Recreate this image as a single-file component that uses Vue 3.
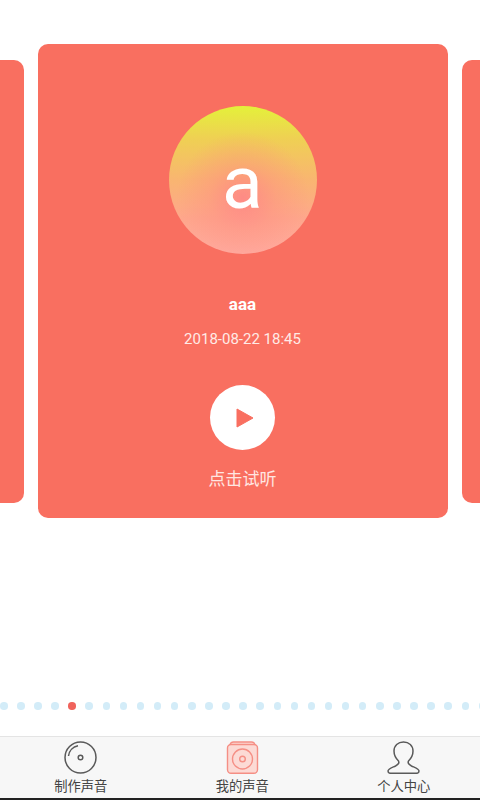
<script setup>
const dots = Array.from({ length: 29 }, (_, i) => i)
</script>

<template>
  <div class="page">
    <div class="carousel">
      <div class="side"></div>
      <div class="card">
        <div class="avatar">a</div>
        <div class="name">aaa</div>
        <div class="date">2018-08-22 18:45</div>
        <div class="play">
          <svg width="18" height="20" viewBox="0 0 18 20"><path d="M1 1 L17 10 L1 19 Z" fill="#f96f60" stroke="#f96f60" stroke-linejoin="round" /></svg>
        </div>
        <div class="hint">点击试听</div>
      </div>
      <div class="side"></div>
    </div>
    <div class="dots">
      <span v-for="d in dots" :key="d" class="dot" :class="{ on: d === 4 }"></span>
    </div>
    <div class="tabs">
      <div class="tab">
        <svg class="icon" width="33" height="33" viewBox="0 0 33 33" fill="none" stroke="#5a5a5a" stroke-width="1.500">
          <circle cx="16.500" cy="16.500" r="15.500" />
          <circle cx="16.500" cy="16.500" r="2.300" />
          <path d="M4.500 15 A12 12 0 0 1 14 4.700" />
        </svg>
        <span>制作声音</span>
      </div>
      <div class="tab">
        <svg class="icon" width="33" height="33" viewBox="0 0 33 33" fill="#fcdad5" stroke="#f58f85" stroke-width="1.400">
          <path d="M4 4 Q4.500 1 7.500 1 H25.500 Q28.500 1 29 4" />
          <rect x="1.500" y="3.500" width="30" height="28.800" rx="3.500" />
          <circle cx="16.500" cy="18" r="10" />
          <circle cx="16.500" cy="18" r="2.800" />
        </svg>
        <span>我的声音</span>
      </div>
      <div class="tab">
        <svg class="icon" width="33" height="33" viewBox="0 0 33 33" fill="none" stroke="#5a5a5a" stroke-width="1.500">
          <path d="M16.500 1 C11 1 7 4.500 7 10 C7 14 8.500 17 11.500 20 C12.500 22 11.500 23.500 8.500 25 C4.500 26.800 1 27.800 1 30 C1 31.500 2 32.300 3.500 32.300 H29.500 C31 32.300 32 31.500 32 30 C32 27.800 28.500 26.800 24.500 25 C21.500 23.500 20.500 22 21.500 20 C24.500 17 26 14 26 10 C26 4.500 22 1 16.500 1 Z" />
        </svg>
        <span>个人中心</span>
      </div>
    </div>
  </div>
</template>

<style scoped>
.page {
  width: 480px;
  height: 800px;
  background: #fff;
  position: relative;
  overflow: hidden;
  font-family: Roboto, "Noto Sans CJK SC", sans-serif;
}
.carousel {
  height: 518px;
  padding: 44px 0 0 5px;
  box-sizing: border-box;
  display: flex;
  gap: 14px;
  justify-content: center;
  align-items: center;
}
.side {
  width: 410px;
  height: 443px;
  background: #f96f60;
  border-radius: 10px;
  flex-shrink: 0;
}
.card {
  width: 410px;
  height: 474px;
  background: #f96f60;
  border-radius: 10px;
  flex-shrink: 0;
  display: flex;
  flex-direction: column;
  align-items: center;
  color: #fff;
}
.avatar {
  margin-top: 62px;
  width: 148px;
  height: 148px;
  border-radius: 50%;
  background:
    radial-gradient(circle at 50% 62%, rgba(255, 130, 135, 0.8) 0, rgba(255, 140, 130, 0.4) 28%, rgba(255, 150, 135, 0) 56%),
    linear-gradient(180deg, #e4f13a 0%, #efd053 22%, #f9b571 50%, #fea78c 76%, #ffab9f 100%);
  font-size: 75px;
  line-height: 152px;
  text-align: center;
}
.name {
  margin-top: 40px;
  font-size: 17px;
  font-weight: 700;
  line-height: 20px;
}
.date {
  margin-top: 15px;
  font-size: 15px;
  line-height: 20px;
  color: #ffeae6;
}
.play {
  margin-top: 36px;
  width: 65px;
  height: 65px;
  border-radius: 50%;
  background: #fff;
  display: flex;
  align-items: center;
  justify-content: center;
}
.play svg {
  margin-left: 4px;
}
.hint {
  margin-top: 17px;
  font-size: 17px;
  line-height: 24px;
  color: #ffe6e2;
}
.dots {
  position: absolute;
  left: 0;
  top: 702px;
  display: flex;
  gap: 9.600px;
  align-items: center;
}
.dot {
  width: 7.500px;
  height: 7.500px;
  border-radius: 50%;
  background: #d3ecf8;
  flex-shrink: 0;
}
.dot.on {
  background: #f0635c;
}
.tabs {
  position: absolute;
  left: 0;
  right: 0;
  top: 736px;
  height: 64px;
  background: #f7f7f7;
  border-top: 1px solid #e4e4e4;
  border-bottom: 2px solid #222;
  box-sizing: border-box;
  display: flex;
}
.tab {
  flex: none;
  width: 161.500px;
  display: flex;
  flex-direction: column;
  align-items: center;
  font-size: 13.300px;
  line-height: 16px;
  color: #444;
  padding-top: 3.500px;
}
.tab span {
  margin-top: 5px;
}
.icon {
  display: block;
}
</style>

<style>
html, body { margin: 0; background: #fff; }
</style>
